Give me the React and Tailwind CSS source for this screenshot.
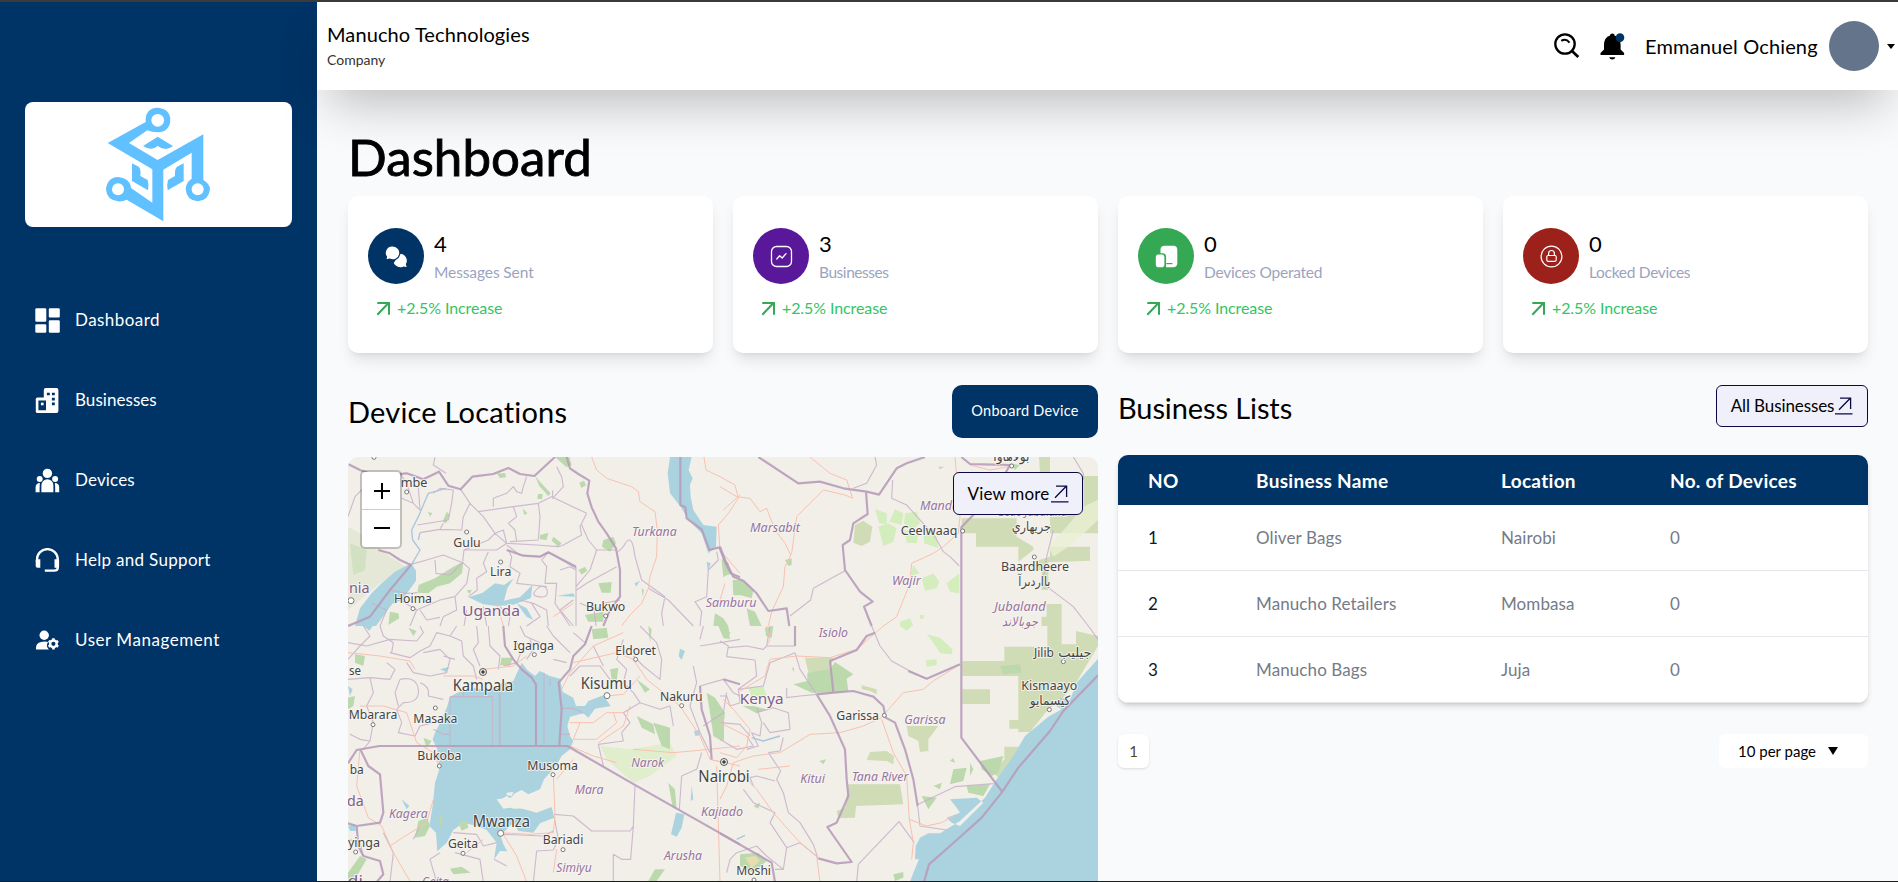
import React from "react";

/* ---------- icons ---------- */
const DashboardIcon = () => (
  <svg className="h-[25px] w-[25px]" viewBox="0 0 25 25" fill="#fff">
    <rect x="0.3" y="0.3" width="11" height="13.4" rx="1.2" />
    <rect x="13.8" y="0.3" width="11" height="9.2" rx="1.2" />
    <rect x="0.3" y="16.2" width="11" height="8.6" rx="1.2" />
    <rect x="13.8" y="12.2" width="11" height="12.6" rx="1.2" />
  </svg>
);
const BusinessIcon = () => (
  <svg className="h-[25px] w-[25px]" viewBox="0 0 25 25">
    <rect x="8.8" y="0" width="14.6" height="25" rx="2" fill="#fff" />
    <rect x="0.8" y="9.6" width="12" height="15.4" rx="1.6" fill="#fff" />
    <path d="M11.9 4.8h2.9v2.4h-2.9zM16.9 4.8h2.9v2.4h-2.9zM16.9 9.8h2.9v2.6h-2.9zM16.9 14.6h2.9v2.6h-2.9zM3.4 12.4h7.6v9.8h-7.6z" fill="#003366" />
    <path d="M5.9 14.6h2.7v2.7h-2.7z" fill="#fff" />
  </svg>
);
const DevicesIcon = () => (
  <svg className="h-[25px] w-[25px]" viewBox="0 0 25 25" fill="#fff">
    <circle cx="12.4" cy="5.4" r="4.7" />
    <circle cx="4.7" cy="11" r="3" />
    <circle cx="20.1" cy="11" r="3" />
    <path d="M6.4 24.2v-7a6 6 0 0 1 12 0v7zM.6 24.2v-5q0-4 4.4-4.2-.4 1.600-.4 9.200zM24.200 24.200v-5q0-4-4.400-4.200.4 1.600.4 9.200z" />
  </svg>
);
const HelpIcon = () => (
  <svg className="h-[25px] w-[25px]" viewBox="0 0 25 25">
    <path d="M2 14v-2.500a10.400 10.400 0 0 1 20.800 0v8q0 3.200-3.600 3.200h-9.400" fill="none" stroke="#fff" strokeWidth="2.300" />
    <path d="M.7 12.600q0-1.400 1.400-1.400h3.200v8.600H2.500q-1.800 0-1.800-1.800zM24.100 12.600q0-1.400-1.400-1.400h-3.200v8.600h3.400q1.200 0 1.200-1.400z" fill="#fff" />
  </svg>
);
const UserGearIcon = () => (
  <svg className="h-[25px] w-[25px]" viewBox="0 0 25 25">
    <circle cx="9.200" cy="7.200" r="4.700" fill="#fff" />
    <path d="M1 21.600v-2.200q.4-5.600 8.600-5.800 2 0 3.400.4-2.600 4 .9 7.600z" fill="#fff" />
    <circle cx="18.400" cy="15.800" r="3.300" fill="none" stroke="#fff" strokeWidth="2.400" />
    <g stroke="#fff" strokeWidth="2.600">
      <path d="M18.400 10.200v2.300M18.400 19.100v2.300M13.600 13l2 1.200M21.200 17.400l2 1.200M13.600 18.600l2-1.200M21.200 14.200l2-1.200" />
    </g>
  </svg>
);
const SearchIcon = () => (
  <svg className="h-[26px] w-[26px]" viewBox="0 0 26 26" fill="none" stroke="#000">
    <circle cx="11" cy="11" r="9.700" strokeWidth="2.300" />
    <path d="M18 18l6.300 6" strokeWidth="2.700" />
    <path d="M7.300 7.900q4.500-3 8.200 1.700" strokeWidth="2" />
  </svg>
);
const BellIcon = () => (
  <svg className="h-[27px] w-[25px]" viewBox="0 0 25 27">
    <path d="M10 2.500q0-2 2.300-2t2.300 2q6 2 6 9.500v4.500l3.500 3.600v2H.5v-2L4 16.500V12q0-7.500 6-9.500z" fill="#000" />
    <path d="M9.200 24.200h6.200q-.6 2.400-3.100 2.400t-3.100-2.400z" fill="#000" />
    <circle cx="20" cy="4.600" r="4.300" fill="#003366" />
  </svg>
);
const ChatIcon = () => (
  <svg className="h-[23px] w-[23px]" viewBox="0 0 23 23">
    <path d="M14.900 8.700a7 7 0 0 1 5.900 10.600l.9 2.700-3.200-.6a7 7 0 0 1-9.800-3.400z" fill="#fff" />
    <path d="M7.900.9a7 7 0 1 1-3.300 13.200L.6 15.100l.9-3.200A7 7 0 0 1 7.900.9z" fill="#fff" stroke="#003366" strokeWidth="1.200" />
  </svg>
);
const ActivityIcon = () => (
  <svg className="h-[23px] w-[23px]" viewBox="0 0 23 23" fill="none" stroke="#fff" strokeWidth="1.300">
    <rect x="1.500" y="1.500" width="20" height="20" rx="5" />
    <path d="M6.800 14l2.800-3.200 2.600 2.200 3.800-4.400" strokeLinecap="round" strokeLinejoin="round" />
  </svg>
);
const GadgetIcon = () => (
  <svg className="h-[23px] w-[23px]" viewBox="0 0 23 23">
    <path d="M5.500 8.200V5q0-4.200 4.200-4.200h8.400q4.200 0 4.200 4.200v13q0 4.200-4.200 4.200H10.800q.3-.7.300-2V12q0-3.400-3-3.800z" fill="#fff" />
    <rect x=".8" y="9.600" width="8.600" height="12.600" rx="2.800" fill="#fff" />
    <path d="M11.400 18.600h6" stroke="#34a853" strokeWidth="1.200" />
  </svg>
);
const LockIcon = () => (
  <svg className="h-[23px] w-[23px]" viewBox="0 0 23 23" fill="none" stroke="#fff" strokeWidth="1.200">
    <circle cx="11.500" cy="11.500" r="10.400" />
    <rect x="6.800" y="10.500" width="9.400" height="5.800" rx="1.200" />
    <path d="M8.600 10.500V8.400a2.900 2.900 0 0 1 5.800 0v2.100" />
  </svg>
);
const TrendIcon = () => (
  <svg className="h-[15px] w-[15px] shrink-0" viewBox="0 0 15 15" fill="none" stroke="#34a853" strokeWidth="2">
    <path d="M1.300 13.700L12.500 2M1.300 2H13V13.700" />
  </svg>
);
const OpenIcon = () => (
  <svg className="h-[18px] w-[19px] shrink-0" viewBox="0 0 19 18" fill="none" stroke="#0c0843" strokeWidth="1.300">
    <path d="M5 12.800L16 1.500M6 1.200h10.600v10.900M1 16.800h17.500" />
  </svg>
);
const Logo = () => (
  <svg className="h-[125px] w-[130px]" viewBox="0 6 390 375" fill="#61c0ff">
    <path d="M38 129L152 66Q150 24 188 23Q226 26 226 61Q224 96 188 97Q170 97 157 91L102 129L188 180L325 103V240Q345 252 345 268Q341 302 308 304Q275 302 272 268Q273 246 290 236V158L205 209V364L95 299Q84 305 69 304Q35 300 33 268Q36 233 69 231Q106 235 108 264L172 308V208Z" />
    <path d="M144 138L188 110L234 138Q212 156 188 138Q170 154 144 138ZM111 190L131 200Q139 208 136 228L158 240Q162 252 159 271L111 243ZM266 190L246 200Q238 208 240 228L219 240Q215 252 218 271L266 243Z" />
    <g fill="#fff"><circle cx="188" cy="61" r="19" /><circle cx="69" cy="268" r="18" /><circle cx="308" cy="268" r="18" /></g>
  </svg>
);

/* ---------- map ---------- */
const WATER = "#aad3df";
const GREEN = "#bcd9ad";
const OLIVE = "#d0dcb6";
const LIME = "#d3edbd";

// Each tile holds its areas, roads, district lines, country borders and labels in tile units.
const tiles = [
  {
    at: "translate(-8 -87) scale(.33333)",
    areas: [
      [OLIVE, "M24 470L80 500L150 560L200 590L120 640L24 720Z", 0.35],
      [GREEN, "M30 520L80 540L75 600L40 615Z", 0.5],
      [WATER, "M213 580L228 602L228 632L188 688L158 700L108 768H45L60 715L95 670L125 640L165 605Z"],
      [WATER, "M990 261H1055L1046 300L1058 325L1050 345L1052 380L1060 420L1090 465L1130 470L1128 530L1105 550L1085 490L1045 450L1022 410L990 370L983 310Z"],
      [WATER, "M385 682L428 668L465 640L492 645L520 626L502 655L492 692L540 682L577 645L573 684L520 704L470 708L430 703ZM530 700L560 715L580 750L560 740ZM650 678L700 670L705 680ZM1100 575L1112 580L1104 605ZM884 640L900 632L888 650Z"],
      [GREEN, "M340 590L370 575L366 610L330 640L290 650L265 670L232 668L236 645L285 625ZM585 318L600 335L632 370L625 378L598 348ZM645 261H688L695 285L680 292ZM470 310H496L498 322L480 324ZM790 510L820 500L828 520L810 545L786 530ZM718 338L732 332L738 346L724 354ZM594 372L608 372L606 388L592 386ZM715 600L735 590L742 602L725 614ZM775 640L815 636L812 668L785 668ZM640 500L665 520L655 530L635 512ZM600 495L625 488L620 510L600 508ZM1145 570L1166 580L1168 615L1150 612ZM1178 630H1200V676H1180ZM1125 730L1150 745L1165 768H1120ZM320 425L330 435L318 460L308 455ZM150 725L175 730L178 745L145 765ZM735 735L790 725L790 755L745 755ZM380 660L396 660L388 672ZM264 425L277 430L270 440ZM548 415L562 430L553 436ZM905 655L912 660L908 680Z"],
    ],
    roads:
      "M755 261L770 300L800 325L875 350L895 365L900 395L945 425L952 480L950 560L930 620L925 655L905 700L870 735L845 768M1092 261L1098 300L1140 320L1185 345L1195 385L1165 430L1135 465L1140 540L1200 610M1150 420L1200 375M470 700L490 768M640 740L700 700",
    rivers: "M318 355L265 370L235 440L215 480L218 510L240 540L215 583M240 488L235 510",
    lines:
      "M24 440L45 380L95 330M285 261L280 285L318 310M180 310L200 340L220 400L240 420L235 350L250 330M280 370L300 355L340 360L335 400L325 450L232 465M362 358L390 400L370 440L365 480L300 478L240 488M390 400L430 440L465 490L500 520L470 540L372 540L368 575M415 425L520 410L595 400L635 380L740 430M560 320L550 350L545 370L530 365L520 350L500 370L460 385V410M595 400L600 440L595 510L510 515M520 410L530 440L505 460L525 480L530 515M638 361V385L670 350L665 320L650 290M740 430L720 470L725 495L670 525L655 530L590 525L500 520M725 465L745 510L770 540L830 540M770 540L750 600L708 650M708 590V768M625 547L708 595M213 583L260 570L310 555L368 578L388 595L380 640L345 680L300 690L230 720L210 768M285 570L288 610L330 615L365 580M372 540L445 510L465 490M445 545L430 580L440 605L410 625L412 660L385 680M505 540L515 560L510 590L540 610L530 640L575 645L620 650M625 547L605 570L620 590L615 640L650 640L645 700L690 768M500 525L540 555L600 560L625 547M600 650Q620 645 622 665T595 680T600 650M540 690L580 700L620 720L625 768M345 680L350 720L310 740L300 768M830 590L740 640L710 660M840 690L790 700L770 720L720 700M850 530Q870 490 880 530L885 560L905 630L975 680L965 730L970 768M925 655L985 690L1060 768M1130 545L1135 570L1105 600L1100 680L1065 695L1085 725L1080 768M230 720L180 690L160 700M430 710L440 768M380 720L372 768M480 710L510 740L505 768M575 700L600 740L560 768M700 690L660 720L700 768M185 385L220 400M465 490L490 480L500 520M150 660L200 670L232 668M660 600L690 590L708 600M760 700L768 768M240 720L260 750L300 742M300 478L310 460M95 700L140 720L120 768M850 530L835 545",
    borders:
      "M24 282L60 300L110 318L200 310L250 328L297 305L325 347L362 358L397 320L460 312L505 294L540 312L583 318L645 261M680 261L690 295L715 312L748 332L742 370L755 412L775 455L800 490L828 535L840 600V680L810 720L790 768M115 540L150 550L180 570L213 585L150 660L90 740L24 768M1021 261V405L1036 412L1040 445L1085 478L1108 540L1138 532L1155 575L1172 610L1200 622M500 540L550 557L600 560L625 547L708 590",
    cities: [["mbe", 222, 352, 80, 200, 366], ["Gulu", 381, 530, 82, 380, 486], ["Lira", 482, 617, 64, 482, 576], ["Hoima", 219, 699, 114, 219, 716], ["Bukwo", 797, 724, 118, 797, 738]],
    regions: [["Turkana", 943, 499, 134]],
    countries: [["Uganda", 453, 739, 174], ["nia", 58, 670, 62]],
    dots: [[102, 262, 6], [33, 692, 9]],
  },
  {
    at: "translate(372 -87) scale(.33333)",
    areas: [
      [OLIVE, "M725 445H890V500L940 530V575L990 560V530H1110V572L985 577V660H965V600H940V540L895 575V530H768V490H725ZM957 261H990V308H960ZM1090 318H1134V490H990V440L1090 410ZM980 702H1025V768H965V740H980ZM405 465L430 452L457 470L450 515L425 528L400 518Z"],
      ["#eaf0d5", "M1134 390L1090 410L1040 470L985 530L1000 560L1060 520L1134 450Z", 0.8],
      [LIME, "M465 418L500 430L500 462L478 460ZM525 418L550 430L545 465L508 455ZM555 430L590 425L600 460L575 480L552 460ZM475 470L505 460L530 475L520 515L490 528ZM553 480L595 490L590 520L560 518ZM610 470L650 500L655 535L612 520ZM605 625L640 610L658 635L650 655L615 662ZM680 640L718 610V670L690 665ZM580 585L598 610L572 620ZM540 755L570 745L580 768H540ZM600 735L612 735L610 748L600 746Z"],
      [GREEN, "M40 630L70 630L100 660L95 685L60 675L40 660ZM80 715L105 725L125 768H90ZM5 565L25 580L30 610L10 622ZM195 570L215 565L215 585L205 588ZM870 280L900 285L885 300ZM655 290L673 290L660 298Z"],
    ],
    roads:
      "M270 261L330 310L380 330L398 385L375 375L310 360L270 400L230 440L215 550L195 590L190 650L155 725L145 768M0 350L50 380L90 385L120 425L140 415L165 480L195 520L212 555M705 261L720 440L715 490L670 530L640 550L575 580L570 640L530 740L490 768M865 290L810 300L750 285M0 690L15 640",
    rivers: "",
    lines:
      "M465 261L470 285L440 340L400 355M518 330L515 385L560 405L600 450L645 500L670 545L690 560L718 588M375 602L280 655L272 690L210 738M1000 480L980 560L968 640L1060 710L1105 768M1060 261L1090 310L1090 330",
    borders:
      "M115 261L235 340L300 335L370 355L440 365L477 374L530 295L560 280L615 261M724 261L750 282L790 283L870 285L850 320L765 430L724 472V768M438 365L443 432L400 460L390 510L368 525L375 600L420 665L458 695L432 710L455 768M0 530L15 570L40 620L70 632L110 670L145 723L200 715L208 768",
    cities: [["Ceelwaaq", 627, 495, 170, 728, 483], ["Baardheere", 945, 604, 204, 943, 561], ["بااردىرآ", 943, 648, 96], ["جريهاري", 934, 482, 118], ["بولاهاوا", 874, 273, 108, 875, 288]],
    regions: [["Marsabit", 165, 485, 150], ["Mandera", 675, 421, 150], ["Wajir", 559, 645, 86], ["Samburu", 33, 710, 152], ["Jubaland", 900, 723, 154], ["جوبالاند", 900, 768, 110], ["Gedo Jubaland", 937, 437, 210]],
    countries: [],
    dots: [],
  },
  {
    at: "translate(-8 169) scale(.33333)",
    areas: [
      [LIME, "M780 360L870 370L990 350L1010 390L930 450L880 470L800 400Z", 0.6],
      [WATER, "M330 212L352 200L400 185L450 195L485 172L520 165L545 110L562 132L585 150L600 135L630 150L660 158L668 198L700 215L708 240L735 240L745 225L790 208L812 240L765 248L745 275L730 262L690 272L682 300L690 330L700 345L690 370L665 390L648 420L612 460L600 490L565 505L545 492L525 502L512 515L470 520L490 548L530 543L590 560L635 543L643 575L600 592L580 620L535 615L520 590L495 615L480 625L490 655L502 676L480 675L462 700L470 650L440 612L410 600L370 590L340 612L320 650L292 676L288 620L268 600L278 540L285 470L298 430L292 370L278 340L285 320L310 270L322 240Z"],
      [WATER, "M1008 560L1033 565L1025 605L1010 632L993 625ZM1020 68L1035 75L1025 102L1016 90ZM1062 315L1078 312L1080 328L1066 330ZM300 130L328 122L318 138ZM70 0H98L88 14ZM24 180L38 190L30 210ZM185 520L208 540L200 550ZM1055 480L1060 520L1052 525ZM24 600L45 595L48 615L30 615Z"],
      ["#f2efe9", "M475 525L500 510L530 530L590 500L612 490L635 510L600 545L520 548ZM500 500L520 498L515 510L500 508Z"],
      [GREEN, "M235 585L262 575L270 600L255 630L225 635ZM355 590L380 585L385 605L365 614ZM755 10L800 5L805 35L760 40ZM890 270L940 295L945 325L905 305ZM940 290L990 305L990 370L965 360ZM1100 200L1125 215L1155 260L1145 345L1120 330L1110 260ZM985 470L1005 490L1010 550L998 545ZM1135 0H1165L1170 40L1150 35ZM330 728L365 722L392 740L340 745ZM945 730L975 730L950 765H925ZM485 95L520 95L510 118L480 118ZM60 690L80 700L40 768H24V740ZM45 85L75 90L70 120L45 110ZM24 215L45 210L40 240L24 250ZM250 335L275 345L260 365ZM810 130L835 125L830 165L815 160ZM205 5L230 15L220 30ZM300 570L310 575L300 610ZM925 0L935 10L930 50ZM890 160L930 190L915 200Z"],
    ],
    roads:
      "M24 80L120 90L210 105L225 130M430 130L520 120L560 90M310 150L400 150L430 160M60 370L50 480L85 575L125 600L160 680L210 765M280 520L260 590L180 640L150 660M298 420L280 380L230 350L200 260L130 240L60 240M640 445L645 570L640 620L570 625L480 620M490 625L530 690L560 768M650 670L640 740M700 400L650 460M665 190L690 140L760 60L850 20M880 100L830 80L700 110M880 100L920 160L1020 240L1080 330L1110 400L1150 410M800 210L850 205L900 150M690 290L760 290L800 260L850 260M775 350L850 300L870 240M880 370L1000 380L1110 370M1110 400L1200 420M1130 420L1140 768M1110 370L1200 360M430 640L380 680M690 360L760 390L830 410M720 290L700 340L770 340L830 290L820 260",
    rivers: "",
    lines:
      "M24 50L80 60L150 40L230 45L250 20L240 0M70 0L90 30L60 60L24 100M120 0L130 30L160 50L155 80M150 80L210 95L240 75L270 60L290 20L330 30L350 0M250 80L300 70L330 100L320 140L270 150L220 140L200 110M330 30L365 45L370 90L400 120L410 160M410 0L415 50L400 70L420 120M445 0L450 60L480 90L475 130M490 120L530 110L545 75L530 50M24 160L90 155L150 160L165 130L140 110M90 155L100 200L80 240L100 290L90 345L70 370M180 160Q230 150 235 190T190 230L170 250L185 290L175 320L225 330L240 300L280 290M180 160L165 200L175 240M240 170Q270 180 265 210L310 220M330 212H457V357M330 212V357M480 180V357M478 200V357M612 140V355M630 158V180M665 247H700L730 262M658 325H690M280 310L310 325H330M370 190V212M540 0L555 30L600 50M620 0L640 30L690 80M570 40L580 70L560 100M700 20L735 50L755 0M640 100L680 110M690 150L720 120L780 120L810 160L850 170L880 200L900 230L850 260L870 290L845 320L850 345L775 355L790 420M850 170L860 130L830 100L850 40M880 90L910 120L960 160L965 100L950 50L900 0M760 60L790 120M1080 40L1090 0M1080 60L1200 40M1060 120L1070 170L1050 240L1080 320L1110 380M1080 180L1150 160L1180 200L1200 210M1085 380L1070 430L1025 450L1018 550M885 480L880 600L870 615H755L700 570L643 565M880 600L872 700L845 700L820 685V768M643 575L655 640L640 672L590 675L580 768M490 625L610 630L640 615M345 680L420 700L430 768M300 680L270 700L290 768M462 700L500 720M24 640L60 650L70 690M130 620L160 680L150 768M220 640L240 600M340 620L410 625L430 660L470 650M30 325L60 340L90 345M345 100L310 90M1090 300L1150 260L1160 200M900 230L960 250L990 240L1000 300",
    borders:
      "M24 412L50 372L118 360H682L887 478L1200 655M658 357L665 250L656 170L690 130L700 90L735 55L755 0M490 0L495 60L520 100L545 130L575 155L588 175V357M62 372L85 420L120 445L130 560L120 590L50 600L24 592M50 600L55 660L70 690L120 705L130 745L110 768M1150 160L1200 175M1080 180L1085 250L1110 330L1115 400",
    cities: [["Iganga", 581, 71, 122, 583, 86], ["Eldoret", 887, 87, 122, 887, 100], ["se", 45, 146, 36], ["Kampala", 429, 194, 182, 0, 0, 48], ["Kisumu", 799, 189, 154, 0, 0, 48], ["Nakuru", 1024, 224, 128, 1025, 239], ["Mbarara", 99, 280, 146, 99, 296], ["Masaka", 286, 290, 132, 286, 246], ["Bukoba", 298, 403, 132, 298, 420], ["Musoma", 638, 431, 152, 639, 446], ["ba", 50, 444, 42], ["Mwanza", 484, 602, 172, 0, 0, 48], ["Geita", 369, 666, 90, 369, 682], ["Bariadi", 669, 654, 122, 669, 671], ["yinga", 72, 662, 96, 47, 678], ["Nairobi", 1152, 467, 154, 0, 0, 48]],
    regions: [["Narok", 923, 422, 98], ["Mara", 747, 505, 86], ["Kagera", 205, 575, 116], ["Arusha", 1029, 701, 114], ["Simiyu", 702, 739, 106], ["Kajiado", 1146, 571, 126], ["Geita", 286, 780, 80]],
    countries: [["da", 46, 539, 50], ["di", 46, 780, 45]],
    dots: [[801, 209, 9], [482, 622, 9]],
    capitals: [[429, 138], [1152, 408]],
  },
  {
    at: "translate(372 169) scale(.33333)",
    areas: [
      [OLIVE, "M853 62H982V0H1025V55H1068V15L1134 30V60L1068 170L1020 225L985 250L930 318H895V308H868V282H895V150H727V105H853ZM727 190H810V234H727ZM853 362H905L840 460L820 440L853 400ZM560 300H655L625 340V375L600 378L595 345L565 330ZM450 378L500 375L522 390L520 415L500 405L440 402ZM385 475H540L550 535L408 540L405 575L355 577L350 555L375 545ZM425 178L470 190V205L450 195L425 190Z"],
      [WATER, "M1134 98L1070 170L1050 222L1020 215L1000 235L1025 250L985 272L915 330L880 390L830 460L795 515L720 585L660 622L625 622L600 635L587 660L585 700L597 700L580 740L570 768H1134ZM690 520L770 515L790 530L720 600L695 590L680 575L720 560L710 545Z"],
      [LIME, "M620 25L660 35L698 70L695 85L660 82L640 50ZM618 102L650 100L650 118L620 122ZM540 0H575L560 14ZM85 185L130 180L140 210L95 215Z"],
      [OLIVE, "M255 95H340L330 135L265 140Z"],
      [GREEN, "M262 140L330 130L345 108L400 145L380 158L385 195L350 200L275 200L220 175L262 165ZM68 240L100 240L140 250L110 262ZM780 405L850 390L835 440L815 450L785 430ZM700 430L740 425L730 465L690 475ZM740 480L810 475L790 510L745 500ZM690 405L700 395L705 410ZM640 480L665 470L660 490ZM605 510L650 515L625 550ZM60 685L115 680L140 705L100 740L60 720ZM520 745L550 738L550 755L525 765ZM298 405L318 400L310 415ZM0 240L12 260V345L0 335ZM5 0L32 20L15 40ZM135 5L160 0L155 35L138 30ZM840 120L900 115L905 140L850 145ZM215 125L222 125V138ZM100 540L120 530L115 548ZM750 410L760 430L750 450Z"],
      ["#e8ddb0", "M75 695L105 690L120 705L95 725Z"],
    ],
    roads:
      "M490 0L410 70L330 95L230 90L150 100L135 150L60 195M720 115L640 165L610 190L550 200L495 262M485 275L430 300L360 320L270 325L180 380L100 390L40 410M485 280L520 380L560 450L568 580L620 600L665 590L700 570M568 580L580 650L575 700M0 380L50 395L80 360L90 310L40 250L10 220M80 330L0 290M40 410L20 480L0 520M60 440L110 490L160 560L240 650L290 690L300 768M115 430L210 420M140 0L150 40L140 60",
    rivers: "M95 335L130 345L180 330M50 640L75 628",
    lines:
      "M0 45L25 60L20 92L105 102L110 150L55 190L60 230L30 240L20 210L0 210M25 65L80 60L130 70L140 60L225 60M150 0L140 60M55 190L130 180L150 110L225 80M225 80L240 130L290 205M200 185L200 215L240 210L290 205M110 245L125 290L120 330L95 320L115 360L80 370M130 290L150 320L210 310L205 260L160 245L110 260M455 0L480 60L515 105L570 135L620 158M145 380L182 435L170 460L190 500L205 560L240 590L280 655L295 700M145 380L180 375L190 335M100 480L90 455L110 450L165 465M70 490L100 530L165 560L150 590L200 665L190 730L165 730M200 665L240 650L295 695M415 715L410 768M415 715L537 587L583 650M30 700L50 680L110 660L140 690L190 730M30 700L20 740M593 540L600 600L680 612M590 537L705 482L820 473M0 290L60 295L90 330M0 340L50 370L100 360L80 330M1105 0L1134 40",
    borders:
      "M0 622L155 710L165 768M724 0V335L845 495M1134 148L1030 255L990 315L895 425L845 500L785 575L690 660L627 715L612 768M720 115L620 158L565 135M290 205L330 270L375 370L380 460L385 510L350 590L322 603L395 708L350 712L295 697M290 205L340 200L400 195L460 212L490 240L497 275L525 290L555 370L580 460L593 540M340 200L335 150L330 105L410 72L440 30L465 20M225 0V60",
    cities: [["Jilib", 972, 92, 60, 1030, 107], ["جيليب", 1065, 92, 100], ["Kismaayo", 988, 192, 168], ["كيسمايو", 990, 236, 122, 988, 251], ["Garissa", 413, 283, 128, 493, 268], ["Moshi", 101, 747, 104, 102, 762]],
    regions: [["Isiolo", 340, 32, 88], ["Garissa", 615, 294, 124], ["Kitui", 278, 470, 74], ["Tana River", 480, 466, 170]],
    countries: [["Kenya", 125, 235, 132]],
    dots: [],
  },
];

const Label = ({ text, x, y, w, size, fill, italic }) => (
  <text
    x={x}
    y={y}
    textAnchor="middle"
    textLength={w}
    lengthAdjust="spacingAndGlyphs"
    fontSize={size}
    fill={fill}
    fontStyle={italic ? "italic" : "normal"}
    stroke="#f8f6f2"
    strokeOpacity="0.85"
    strokeWidth="6"
    strokeLinejoin="round"
    paintOrder="stroke"
  >
    {text}
  </text>
);

const LocationMap = () => (
  <svg className="block h-[424px] w-[750px] font-['Noto_Sans','DejaVu_Sans',sans-serif]" viewBox="0 0 750 424">
    <rect width="750" height="424" fill="#f2efe9" />
    {tiles.map((t, i) => (
      <g key={i} transform={t.at}>
        {t.areas.map(([fill, d, o], k) => (
          <path key={k} d={d} fill={fill} opacity={o || 1} />
        ))}
      </g>
    ))}
    {tiles.map((t, i) => (
      <g key={i} transform={t.at} fill="none" strokeLinejoin="round">
        <path d={t.lines} stroke="#c7b0c9" strokeWidth="3.4" opacity="0.85" />
        <path d={t.roads} stroke="#f9c0b0" strokeWidth="3" />
        <path d={t.rivers} stroke="#a9c6dc" strokeWidth="4" />
        <path d={t.borders} stroke="#b79cba" strokeWidth="6.5" opacity="0.9" />
      </g>
    ))}
    {tiles.map((t, i) => (
      <g key={i} transform={t.at}>
        {t.dots.map(([x, y, r], k) => (
          <circle key={k} cx={x} cy={y} r={r} fill="#fff" stroke="#777" strokeWidth="3" />
        ))}
        {(t.capitals || []).map(([x, y], k) => (
          <g key={k} fill="#f2efe9" stroke="#555" strokeWidth="3">
            <circle cx={x} cy={y} r="10.500" />
            <circle cx={x} cy={y} r="4" fill="#333" />
          </g>
        ))}
        {t.regions.map(([s, x, y, w], k) => (
          <Label key={k} text={s} x={x} y={y} w={w} size="38" fill="#96749f" italic />
        ))}
        {t.countries.map(([s, x, y, w], k) => (
          <Label key={k} text={s} x={x} y={y} w={w} size="44" fill="#7f5c8c" />
        ))}
        {t.cities.map(([s, x, y, w, dx, dy, size], k) => (
          <g key={k}>
            {dx ? <circle cx={dx} cy={dy} r="6" fill="#fff" stroke="#777" strokeWidth="3" /> : null}
            <Label text={s} x={x} y={y} w={w} size={size || 39} fill="#454545" />
          </g>
        ))}
      </g>
    ))}
  </svg>
);

/* ---------- data ---------- */
const nav = [
  { label: "Dashboard", Icon: DashboardIcon, track: "tracking-[0.45px]" },
  { label: "Businesses", Icon: BusinessIcon, track: "tracking-[0.05px]" },
  { label: "Devices", Icon: DevicesIcon, track: "tracking-[0.15px]" },
  { label: "Help and Support", Icon: HelpIcon, track: "tracking-[0.3px]" },
  { label: "User Management", Icon: UserGearIcon, track: "tracking-[0.55px]" },
];
const stats = [
  { value: "4", label: "Messages Sent", bg: "bg-[#003366]", icon: <ChatIcon />, track: "tracking-[-0.1px]" },
  { value: "3", label: "Businesses", bg: "bg-[#581899]", icon: <ActivityIcon />, track: "tracking-[-0.45px]" },
  { value: "0", label: "Devices Operated", bg: "bg-[#34a853]", icon: <GadgetIcon />, track: "tracking-[-0.25px]" },
  { value: "0", label: "Locked Devices", bg: "bg-[#9c211b]", icon: <LockIcon />, track: "tracking-[-0.3px]" },
];
const rows = [
  ["1", "Oliver Bags", "Nairobi", "0"],
  ["2", "Manucho Retailers", "Mombasa", "0"],
  ["3", "Manucho Bags", "Juja", "0"],
];

const Sidebar = () => (
  <aside className="w-[317px] shrink-0 bg-[#003366] px-[25px] pt-[100px]">
    <div className="flex h-[125px] w-[267px] items-center justify-center overflow-hidden rounded-lg bg-white pl-[3px]">
      <Logo />
    </div>
    <nav className="mt-[53px]">
      {nav.map(({ label, Icon, track }) => (
        <div key={label} className="flex h-20 items-center gap-[15px] pl-[10px]">
          <Icon />
          <span className={"text-[17px] leading-6 text-white " + track}>{label}</span>
        </div>
      ))}
    </nav>
  </aside>
);

const Header = () => (
  <header className="relative z-10 flex h-[88px] items-center justify-between bg-white pl-[10px] pr-[3px] shadow-2xl">
    <div className="-mt-0.5">
      <div className="text-[20px] leading-7 tracking-[0.1px]">Manucho Technologies</div>
      <div className="text-[14px] leading-[23px] text-[#333]">Company</div>
    </div>
    <div className="flex items-center">
      <SearchIcon />
      <span className="ml-5"><BellIcon /></span>
      <span className="ml-5 w-[175px] whitespace-nowrap text-[20px] tracking-[0.15px]">Emmanuel Ochieng</span>
      <span className="ml-[9px] h-[50px] w-[50px] rounded-full bg-[#64748b]" />
      <svg className="ml-2 h-[5px] w-[8px]" viewBox="0 0 8 5"><path d="M0 0h8L4 5z" /></svg>
    </div>
  </header>
);

const StatCard = ({ value, label, bg, icon, track }) => (
  <div className="h-[157px] w-[365px] rounded-[10px] bg-white px-5 pt-8 shadow-[0_10px_15px_-3px_rgba(0,0,0,0.1),0_4px_6px_-4px_rgba(0,0,0,0.1)]">
    <div className="flex h-14 gap-[10px]">
      <div className={"flex h-14 w-14 items-center justify-center rounded-full " + bg}>{icon}</div>
      <div>
        <div className="text-[22px] leading-8">{value}</div>
        <div className={"text-[15.500px] leading-6 text-[#9ca3c0] " + track}>{label}</div>
      </div>
    </div>
    <div className="mt-3 flex items-center gap-[6px] pl-2 text-[16px] leading-6 text-[#34c465]">
      <TrendIcon />
      <span className="tracking-[-0.1px]">+2.5% Increase</span>
    </div>
  </div>
);

const OutlineButton = ({ children, className }) => (
  <button className={"flex items-center justify-center rounded-md border border-[#0c0843] bg-[#f0f0fb] text-[17px] text-black " + className}>
    {children}
    <OpenIcon />
  </button>
);

const Locations = () => (
  <section className="w-[750px]">
    <div className="flex h-[53px] items-center justify-between">
      <h2 className="text-[29px] tracking-[0.2px]">Device Locations</h2>
      <button className="h-[53px] w-[146px] rounded-[10px] bg-[#003366] pb-0.5 text-[14.500px] tracking-[0.25px] text-white">Onboard Device</button>
    </div>
    <div className="relative mt-[19px] overflow-hidden rounded-t-[10px]">
      <LocationMap />
      <div className="absolute left-[12px] top-[13px] w-[42px] rounded-[5px] border-2 border-black/20 bg-white bg-clip-padding">
        <div className="flex h-[38px] items-center justify-center border-b border-[#ccc] pl-[2px]">
          <svg className="h-4 w-4" viewBox="0 0 16 16" stroke="#000" strokeWidth="2"><path d="M0 8h16M8 0v16" /></svg>
        </div>
        <div className="flex h-[37px] items-center justify-center pb-[1px] pl-[2px]">
          <svg className="h-4 w-4" viewBox="0 0 16 16" stroke="#000" strokeWidth="2"><path d="M0 8h16" /></svg>
        </div>
      </div>
      <div className="absolute left-[605px] top-[15px]">
        <OutlineButton className="h-[43px] w-[130px] tracking-[0.2px]">View more</OutlineButton>
      </div>
    </div>
  </section>
);

const Businesses = () => (
  <section className="w-[750px]">
    <div className="flex h-[42px] items-center justify-between">
      <h2 className="pt-[3px] text-[29px] tracking-[-0.1px]">Business Lists</h2>
      <OutlineButton className="h-[42px] w-[152px] tracking-[-0.1px]">All Businesses</OutlineButton>
    </div>
    <div className="mt-7 overflow-hidden rounded-[10px] bg-white shadow-[0_4px_6px_-1px_rgba(0,0,0,0.15),0_2px_4px_-2px_rgba(0,0,0,0.12)]">
      <div className="grid h-[50px] grid-cols-[108px_245px_169px_1fr] items-center bg-[#003366] pl-[30px] pt-0.5 text-[19px] font-bold tracking-[0.3px] text-white">
        <span>NO</span><span>Business Name</span><span>Location</span><span>No. of Devices</span>
      </div>
      {rows.map((r) => (
        <div key={r[0]} className="grid h-[66px] grid-cols-[108px_245px_169px_1fr] items-center border-b border-[#e5e7eb] pl-[30px] pt-px text-[17px] tracking-[0.1px] text-[#757b87]">
          <span className="text-[#111827]">{r[0]}</span><span>{r[1]}</span><span>{r[2]}</span><span>{r[3]}</span>
        </div>
      ))}
    </div>
    <div className="mt-[31px] flex justify-between">
      <div className="flex h-[34px] w-[31px] items-center justify-center rounded-md bg-white text-[15px] text-[#5c4318] shadow-sm">1</div>
      <div className="flex h-[34px] w-[149px] items-center gap-[12px] rounded-md bg-white pl-[19px] text-[15px]">
        <span>10 per page</span>
        <svg className="h-2 w-[10px]" viewBox="0 0 10 8"><path d="M0 0h10L5 8z" /></svg>
      </div>
    </div>
  </section>
);

export default function App() {
  return (
    <div className="flex h-[882px] w-[1898px] flex-col overflow-hidden bg-[#f8fafc] font-['Lato',sans-serif] text-black [font-variant-ligatures:none]">
      <div className="h-[2px] shrink-0 bg-[#3b3b3b]" />
      <div className="flex h-[879px]">
        <Sidebar />
        <div className="flex flex-1 flex-col">
          <Header />
          <main className="pl-[31px] pt-[34px]">
            <h1 className="h-[72px] text-[51px] leading-[66px] tracking-[0.1px] [-webkit-text-stroke:0.9px_#000]">Dashboard</h1>
            <div className="flex gap-5">
              {stats.map((s) => <StatCard key={s.label} {...s} />)}
            </div>
            <div className="mt-8 flex gap-5">
              <Locations />
              <Businesses />
            </div>
          </main>
        </div>
      </div>
      <div className="h-px shrink-0 bg-[#1c1c1c]" />
    </div>
  );
}
